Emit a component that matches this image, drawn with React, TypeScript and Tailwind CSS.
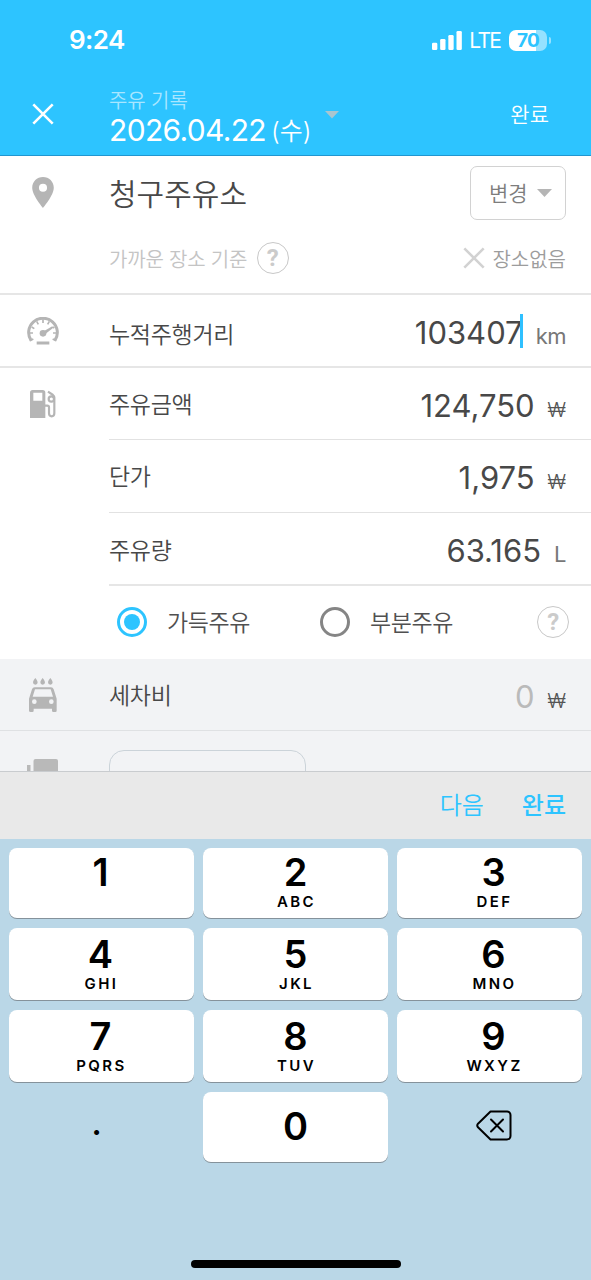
import { useState, type ReactNode } from "react";
import clsx from "clsx";

interface FuelRowProps {
  label: string;
  value: string;
  unit: string;
  icon?: ReactNode;
  focused?: boolean;
  className?: string;
  labelClassName?: string;
  valueClassName?: string;
}

const KEYS = [
  { digit: "1", letters: "" },
  { digit: "2", letters: "ABC" },
  { digit: "3", letters: "DEF" },
  { digit: "4", letters: "GHI" },
  { digit: "5", letters: "JKL" },
  { digit: "6", letters: "MNO" },
  { digit: "7", letters: "PQRS" },
  { digit: "8", letters: "TUV" },
  { digit: "9", letters: "WXYZ" },
];

const SignalIcon = () => (
  <svg width="30" height="19" viewBox="0 0 90 57" fill="#fff">
    <rect x="0" y="35" width="16" height="22" rx="4" />
    <rect x="24.500" y="24" width="16" height="33" rx="4" />
    <rect x="49" y="12" width="16" height="45" rx="4" />
    <rect x="73.500" y="0" width="16" height="57" rx="4" />
  </svg>
);

const PinIcon = () => (
  <svg width="22" height="31" viewBox="0 0 64 92" fill="#b5b5b5">
    <path
      fillRule="evenodd"
      d="M32 0C14 0 0 14 0 32c0 23 32 60 32 60s32-37 32-60C64 14 50 0 32 0Zm0 44a12 12 0 1 1 0-24 12 12 0 0 1 0 24Z"
    />
  </svg>
);

const GaugeIcon = () => (
  <svg width="32" height="28" viewBox="0 0 96 84" fill="none" stroke="#b5b5b5">
    <path d="M12.500 71A43 43 0 1 1 83.500 71" strokeWidth="9" />
    <path
      d="M9 71l10-5M87 71l-10-5M7 48h11M89 48H78M14 30l8 5M82 30l-4 3M29 13l5 9M48 7v11M67 13l-5 9"
      strokeWidth="5"
    />
    <path d="M46 45L76 28L79 32L51 54Z" fill="#b5b5b5" stroke="none" />
    <circle cx="48" cy="49" r="10" fill="#b5b5b5" stroke="none" />
    <path d="M29 78h38" strokeWidth="9" />
  </svg>
);

const PumpIcon = () => (
  <svg width="26" height="28" viewBox="0 0 78 84" fill="none" stroke="#b5b5b5">
    <path
      d="M8 0h30a8 8 0 0 1 8 8v76H0V8a8 8 0 0 1 8-8Zm2 8v24h27V8Z"
      fill="#b5b5b5"
      fillRule="evenodd"
      stroke="none"
    />
    <path
      d="M45 47h7q5 0 5 5v18q0 9 8 9t8-9V22q0-4-4-7L54 5"
      strokeWidth="6.500"
    />
    <circle cx="64" cy="27" r="8" strokeWidth="6.500" />
  </svg>
);

const CarWashIcon = () => (
  <svg width="28" height="34" viewBox="0 0 84 102" fill="#b5b5b5">
    <path d="M19 0s-7 8-7 13a7 7 0 0 0 14 0c0-5-7-13-7-13ZM41 0s-7 8-7 13a7 7 0 0 0 14 0c0-5-7-13-7-13ZM64 0s-7 8-7 13a7 7 0 0 0 14 0c0-5-7-13-7-13Z" />
    <path
      fillRule="evenodd"
      d="M17 28h49q6 0 8 6l9 28v36q0 4-4 4h-6q-4 0-4-4v-6H14v6q0 4-4 4H5q-5 0-5-4V62l9-28q2-6 8-6Zm1 6L11 56h61l-7-22ZM16 64a7 7 0 1 0 0 14a7 7 0 0 0 0-14Zm51 0a7 7 0 1 0 0 14a7 7 0 0 0 0-14Z"
    />
  </svg>
);

const CloseIcon = ({ className }: { className?: string }) => (
  <svg
    className={className}
    width="22"
    height="22"
    viewBox="0 0 22 22"
    fill="none"
    stroke="currentColor"
    strokeWidth="2.600"
  >
    <path d="M1.300 1.300l19.400 19.400M20.700 1.300L1.300 20.700" />
  </svg>
);

const BackspaceIcon = () => (
  <svg
    width="36"
    height="31"
    viewBox="0 0 36 31"
    fill="none"
    stroke="#000"
    strokeWidth="2"
    strokeLinecap="round"
    strokeLinejoin="round"
  >
    <path d="M14.500 1.500H31a3.500 3.500 0 0 1 3.500 3.500v21a3.500 3.500 0 0 1-3.500 3.500H14.500L2 17.300q-1.500-1.800 0-3.600Z" />
    <path d="M15 9.500l12 12M27 9.500l-12 12" />
  </svg>
);

const HelpBadge = () => (
  <span className="flex size-8 items-center justify-center rounded-full border-[1.500px] border-[#c8c8c8] font-[Roboto] text-2xl leading-none font-bold text-[#cbcbcb]">
    ?
  </span>
);

const Radio = ({ checked }: { checked: boolean }) => (
  <span
    className={clsx(
      "flex size-[30px] items-center justify-center rounded-full border-3",
      checked ? "border-[#2dc4ff]" : "border-[#858585]",
    )}
  >
    {checked && <span className="size-4 rounded-full bg-[#2dc4ff]" />}
  </span>
);

const FuelRow = ({
  label,
  value,
  unit,
  icon,
  focused,
  className,
  labelClassName = "pt-[3px]",
  valueClassName = "text-[#484848]",
}: FuelRowProps) => (
  <div className={clsx("flex", className)}>
    <div className="flex w-[109px] shrink-0 items-center justify-center pr-6">
      {icon}
    </div>
    <div className="flex flex-1 items-center justify-between pr-[25px]">
      <span
        className={clsx(
          "text-[23px] font-[350] tracking-[-0.3px] text-[#484848]",
          labelClassName,
        )}
      >
        {label}
      </span>
      <div
        className={clsx("flex items-baseline", focused ? "pt-1" : "pt-[3px]")}
      >
        <span className={clsx("text-[31px]", valueClassName)}>{value}</span>
        {focused && (
          <span className="-mt-1 -ml-[3px] h-[34px] w-[3px] self-center bg-[#2fc0ff]" />
        )}
        {unit === "₩" ? (
          <span className="ml-[13px] text-[20px] font-light text-[#555]">
            ₩
          </span>
        ) : (
          <span className="ml-[13px] text-[22px] tracking-[-0.5px] text-[#777]">
            {unit}
          </span>
        )}
      </div>
    </div>
  </div>
);

const App = () => {
  const [fillType, setFillType] = useState("full");

  return (
    <div className="flex h-[1280px] w-[591px] flex-col overflow-hidden bg-white font-['Inter','Noto_Sans_CJK_KR',sans-serif] leading-none">
      <header className="flex h-[156px] shrink-0 flex-col border-b border-[#2196d0] bg-[#2dc4ff] text-white">
        {/* Status bar */}
        <div className="flex h-20 items-center justify-between pr-10 pl-[69px]">
          <span className="text-[26px] font-semibold tracking-[-0.6px]">
            9:24
          </span>
          <div className="flex items-center">
            <SignalIcon />
            <span className="ml-[7px] text-[21px] tracking-[-1.800px]">
              LTE
            </span>
            <span className="ml-[9px] flex h-[21px] w-[38px] items-center justify-center overflow-hidden rounded-[7px] bg-linear-to-r from-white from-70% to-[#96e1ff] to-70% text-[19px] font-bold tracking-[-0.8px] text-[#2dc4ff]">
              70
            </span>
            <span className="ml-0.5 h-[7px] w-0.5 rounded-r-full bg-[#96e1ff]" />
          </div>
        </div>

        {/* Title bar */}
        <div className="flex flex-1 items-start">
          <div className="flex w-[109px] pt-[23px] pl-8">
            <CloseIcon />
          </div>
          <div className="flex flex-1 flex-col pt-2.5">
            <span className="text-[20px] leading-[22px] font-[350] tracking-[-0.1px] text-[#a9e6ff]">
              주유 기록
            </span>
            <div className="-mt-px flex items-start">
              <span className="text-[30px] leading-[38px] tracking-[-0.65px]">
                2026.04.22
              </span>
              <span className="ml-[5px] pt-px text-[25px] leading-[38px] font-[350]">
                (수)
              </span>
              <svg className="ml-3.5" width="14" height="8" viewBox="0 0 14 8">
                <path d="M0 0h14L7 7.500Z" fill="#a9c5cf" />
              </svg>
            </div>
          </div>
          <button className="pt-6 pr-[42px] text-[21px] font-[350]">
            완료
          </button>
        </div>
      </header>

      <main className="flex min-h-0 flex-1 flex-col overflow-hidden">
        {/* Gas station */}
        <section className="flex h-[139px] shrink-0 border-b-2 border-[#e6e6e6]">
          <div className="w-[109px] pt-[21px] pl-8">
            <PinIcon />
          </div>
          <div className="flex flex-1 flex-col pt-2.5 pr-[25px]">
            <div className="flex h-[54px] items-center justify-between">
              <span className="pt-0.5 text-[30px] font-[350] text-[#484848]">
                청구주유소
              </span>
              <button className="flex h-[54px] w-24 items-center rounded-[7px] border-[1.500px] border-[#d2d2d2] pl-[18px] text-[21px] font-[350] text-[#7d7d7d]">
                변경
                <svg className="ml-[9px]" width="15" height="8" viewBox="0 0 15 8">
                  <path d="M0 0h15L7.500 8Z" fill="#b5b5b5" />
                </svg>
              </button>
            </div>
            <div className="mt-[22px] flex h-8 items-center font-[350]">
              <span className="pt-[3px] text-[20px] tracking-[-0.2px] text-[#c4c4c4]">
                가까운 장소 기준
              </span>
              <span className="ml-[9.500px]">
                <HelpBadge />
              </span>
              <CloseIcon className="ml-auto text-[#d2d2d2]" />
              <span className="ml-[7px] pt-[3px] text-[20px] text-[#9c9c9c]">
                장소없음
              </span>
            </div>
          </div>
        </section>

        <FuelRow
          label="누적주행거리"
          value="103407"
          unit="km"
          icon={<GaugeIcon />}
          focused
          className="h-[73px] shrink-0 border-b-2 border-[#e6e6e6]"
          labelClassName="pt-[9px]"
        />
        <FuelRow
          label="주유금액"
          value="124,750"
          unit="₩"
          icon={<PumpIcon />}
          className="h-[71px] shrink-0"
        />
        <div className="ml-[109px] shrink-0 border-y-[1.500px] border-[#e2e2e2]">
          <FuelRow
            label="단가"
            value="1,975"
            unit="₩"
            className="-ml-[109px] h-[72px]"
          />
        </div>
        <FuelRow
          label="주유량"
          value="63.165"
          unit="L"
          className="h-[71px] shrink-0"
          labelClassName="pt-[5px]"
        />

        {/* Full or partial fill */}
        <div className="ml-[109px] flex h-[75px] shrink-0 items-center border-t-2 border-[#e6e6e6] pr-[22px] pb-0.5 pl-2 text-[23px] font-[350] tracking-[-0.4px] text-[#505050]">
          <button
            className="flex items-center gap-5"
            onClick={() => setFillType("full")}
          >
            <Radio checked={fillType === "full"} />
            <span className="pt-[3px]">가득주유</span>
          </button>
          <button
            className="ml-[70px] flex items-center gap-5"
            onClick={() => setFillType("partial")}
          >
            <Radio checked={fillType === "partial"} />
            <span className="pt-[3px]">부분주유</span>
          </button>
          <span className="ml-auto">
            <HelpBadge />
          </span>
        </div>

        <div className="flex-1 bg-[#f2f3f5]">
          <FuelRow
            label="세차비"
            value="0"
            unit="₩"
            icon={<CarWashIcon />}
            className="h-[72px] border-b border-[#dfe1e3]"
            valueClassName="text-[#bababa]"
          />
          <div className="flex pt-[19px]">
            <div className="w-[109px] pt-[9px] pl-[27px]">
              <svg width="31" height="32" viewBox="0 0 31 32" fill="#b9b9b9">
                <rect x="6.500" y="0" width="24.500" height="24" rx="2" />
                <path d="M0 6h3.500v22H25v4H0Z" />
              </svg>
            </div>
            <div className="h-20 w-[197px] rounded-[15px] border-[1.500px] border-[#cbd3d9]" />
          </div>
        </div>
      </main>

      {/* Keyboard toolbar */}
      <div className="flex h-[68px] shrink-0 items-center justify-end gap-[38px] border-t border-[#c9cccf] bg-[#e9e9e9] pr-[25px] text-2xl text-[#2dc4ff]">
        <button className="font-[350]">다음</button>
        <button className="font-medium">완료</button>
      </div>

      {/* Number pad */}
      <div className="flex h-[441px] shrink-0 flex-col bg-[#bad7e7] px-[9px] pt-[9px] text-black">
        <div className="grid grid-cols-3 grid-rows-[70px_72px_72px_70px] gap-x-[9px] gap-y-2.5">
          {KEYS.map((key, i) => (
            <button
              key={key.digit}
              className={clsx(
                "flex flex-col items-center rounded-lg bg-white shadow-[0_1px_0_0_#85929b]",
                i < 3 ? "pt-[5px]" : "pt-[7px]",
                i % 3 === 0 && "pr-0.5",
                i % 3 === 2 && "pl-2",
              )}
            >
              <span className="text-[38px] leading-[38px] font-semibold">
                {key.digit}
              </span>
              <span className="mt-[3px] pl-0.5 text-[15px] leading-4 font-semibold tracking-[2.400px]">
                {key.letters}
              </span>
            </button>
          ))}
          <button className="flex items-center justify-center pr-2.5 pb-[7px] text-[32px] font-semibold">
            .
          </button>
          <button className="flex items-center justify-center rounded-lg bg-white pb-[3px] text-[38px] font-semibold shadow-[0_1px_0_0_#85929b]">
            0
          </button>
          <button className="flex items-center justify-center pb-1 pl-2">
            <BackspaceIcon />
          </button>
        </div>
        <div className="mx-auto mt-auto mb-3 h-2 w-[210px] rounded-full bg-black" />
      </div>
    </div>
  );
};

export default App;
